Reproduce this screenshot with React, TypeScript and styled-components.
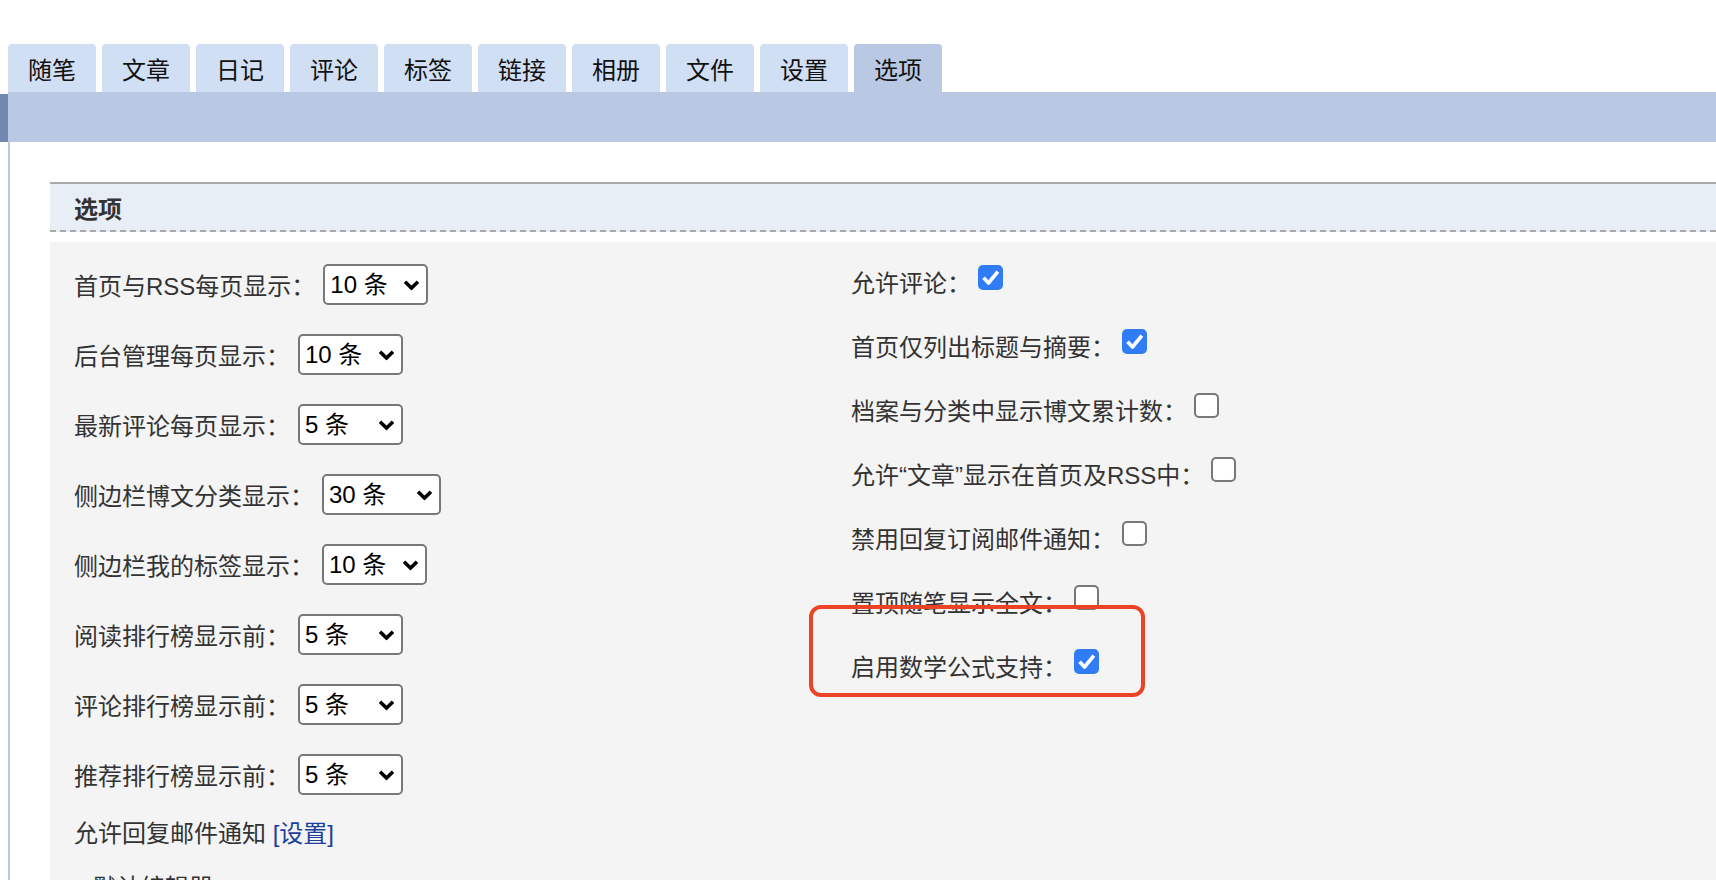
import { createGlobalStyle, styled } from "styled-components";

const GlobalStyle = createGlobalStyle`
  html, body {
    margin: 0;
    padding: 0;
    background: #ffffff;
    overflow: hidden;
  }
  body {
    font-family: "Liberation Sans", "Noto Sans CJK SC", sans-serif;
    color: #333;
  }
`;

const tabs = ["随笔", "文章", "日记", "评论", "标签", "链接", "相册", "文件", "设置", "选项"];

const selectRows = [
  { label: "首页与RSS每页显示：", value: "10", width: 105 },
  { label: "后台管理每页显示：", value: "10", width: 105 },
  { label: "最新评论每页显示：", value: "5", width: 105 },
  { label: "侧边栏博文分类显示：", value: "30", width: 119 },
  { label: "侧边栏我的标签显示：", value: "10", width: 105 },
  { label: "阅读排行榜显示前：", value: "5", width: 105 },
  { label: "评论排行榜显示前：", value: "5", width: 105 },
  { label: "推荐排行榜显示前：", value: "5", width: 105 },
];

const checkRows = [
  { label: "允许评论：", checked: true },
  { label: "首页仅列出标题与摘要：", checked: true },
  { label: "档案与分类中显示博文累计数：", checked: false },
  { label: "允许“文章”显示在首页及RSS中：", checked: false },
  { label: "禁用回复订阅邮件通知：", checked: false },
  { label: "置顶随笔显示全文：", checked: false },
  { label: "启用数学公式支持：", checked: true, highlight: true },
];

const App: React.FC = () => {
  return (
    <>
      <GlobalStyle />
      <TabBar>
        {tabs.map((t) => (
          <Tab key={t} $active={t === "选项"}>
            {t}
          </Tab>
        ))}
      </TabBar>
      <SubBar>
        <SubBarEdge />
        <SubBarFill />
      </SubBar>
      <Main>
        <PanelHeader>选项</PanelHeader>
        <PanelBody>
          <LeftCol>
            {selectRows.map((r) => (
              <SelectRow key={r.label}>
                <span>{r.label}</span>
                <SelectBox $w={r.width}>
                  <NativeSelect defaultValue={r.value}>
                    {["5", "10", "15", "20", "30", "50"].map((n) => (
                      <option key={n} value={n}>
                        {n} 条
                      </option>
                    ))}
                  </NativeSelect>
                  <Chevron width="17" height="11" viewBox="0 0 17 11">
                    <path d="M2 2.2l6.5 6.3 6.5-6.3" fill="none" stroke="#000" strokeWidth="3.6" />
                  </Chevron>
                </SelectBox>
              </SelectRow>
            ))}
            <Notes>
              <TextRow>
                允许回复邮件通知 <Link href="#">[设置]</Link>
              </TextRow>
              <TextRow $indent={19}>默认编辑器：</TextRow>
            </Notes>
          </LeftCol>
          <RightCol>
            {checkRows.map((r) => (
              <CheckRow key={r.label}>
                <span>{r.label}</span>
                <CheckBox $checked={r.checked} role="checkbox" aria-checked={r.checked}>
                  {r.checked && (
                    <svg width="25" height="25" viewBox="0 0 25 25">
                      <path
                        d="M5.5 12.8l5 5.2L19.8 6.6"
                        fill="none"
                        stroke="#fff"
                        strokeWidth="3.6"
                        strokeLinejoin="round"
                      />
                    </svg>
                  )}
                </CheckBox>
                {r.highlight && <Highlight />}
              </CheckRow>
            ))}
          </RightCol>
        </PanelBody>
      </Main>
    </>
  );
};

export default App;

const TabBar = styled.div`
  display: flex;
  gap: 6px;
  padding: 44px 0 0 8px;
`;

const Tab = styled.div<{ $active: boolean }>`
  width: 88px;
  height: 48px;
  display: flex;
  align-items: center;
  justify-content: center;
  border-radius: 4px 4px 0 0;
  background: ${({ $active }) => ($active ? "#b9c9e3" : "#d1dff5")};
  color: #111;
  font-size: 24px;
`;

const SubBar = styled.div`
  display: flex;
  height: 50px;
`;

const SubBarEdge = styled.div`
  width: 8px;
  margin-top: 2px;
  background: #7189b1;
`;

const SubBarFill = styled.div`
  flex: 1;
  background: #b9c9e3;
`;

const Main = styled.div`
  margin-left: 8px;
  border-left: 2px solid #b9c9e3;
  padding: 40px 0 0 40px;
  min-height: 800px;
`;

const PanelHeader = styled.div`
  height: 46px;
  display: flex;
  align-items: center;
  padding-left: 24px;
  background: #e7eef6;
  border-top: 2px solid #a9a9a9;
  border-bottom: 2px dashed #a9a9a9;
  font-size: 24px;
  font-weight: bold;
  color: #333;
`;

const PanelBody = styled.div`
  margin-top: 10px;
  background: #f4f4f4;
  display: grid;
  grid-template-columns: 777px 1fr;
  padding: 22px 0 0 24px;
  min-height: 700px;
  font-size: 24px;
`;

const LeftCol = styled.div`
  display: flex;
  flex-direction: column;
  gap: 29px;
`;

const SelectRow = styled.div`
  display: flex;
  align-items: center;
  gap: 8px;
  height: 41px;
`;

const SelectBox = styled.span<{ $w: number }>`
  position: relative;
  display: inline-flex;
  width: ${({ $w }) => $w}px;
  height: 41px;
`;

const NativeSelect = styled.select`
  appearance: none;
  width: 100%;
  height: 100%;
  box-sizing: border-box;
  border: 2px solid #787878;
  border-radius: 5px;
  background: #fff;
  padding: 0 0 0 5px;
  font-family: "Liberation Sans", "Noto Sans CJK SC", sans-serif;
  font-size: 24px;
  color: #000;
  outline: none;
`;

const Chevron = styled.svg`
  position: absolute;
  right: 8px;
  top: 50%;
  transform: translateY(-50%);
  pointer-events: none;
`;

const Notes = styled.div`
  display: flex;
  flex-direction: column;
  gap: 34px;
`;

const TextRow = styled.div<{ $indent?: number }>`
  height: 20px;
  line-height: 20px;
  padding-left: ${({ $indent }) => $indent ?? 0}px;
  white-space: nowrap;
`;

const Link = styled.a`
  color: #1c3f9c;
  text-decoration: none;
`;

const RightCol = styled.div`
  display: flex;
  flex-direction: column;
  gap: 38px;
`;

const CheckRow = styled.div`
  position: relative;
  display: flex;
  align-items: center;
  height: 26px;
  white-space: nowrap;

  & > span:first-child {
    margin-top: 9px;
  }
`;

const CheckBox = styled.span<{ $checked: boolean }>`
  display: inline-flex;
  width: 25px;
  height: 25px;
  box-sizing: border-box;
  margin-left: 7px;
  border-radius: 5px;
  background: ${({ $checked }) => ($checked ? "#2f7cf6" : "#fff")};
  border: ${({ $checked }) => ($checked ? "none" : "2px solid #787878")};
`;

const Highlight = styled.div`
  position: absolute;
  left: -42px;
  top: -43px;
  width: 336px;
  height: 92px;
  box-sizing: border-box;
  border: 4px solid #ec4327;
  border-radius: 12px;
  pointer-events: none;
`;
